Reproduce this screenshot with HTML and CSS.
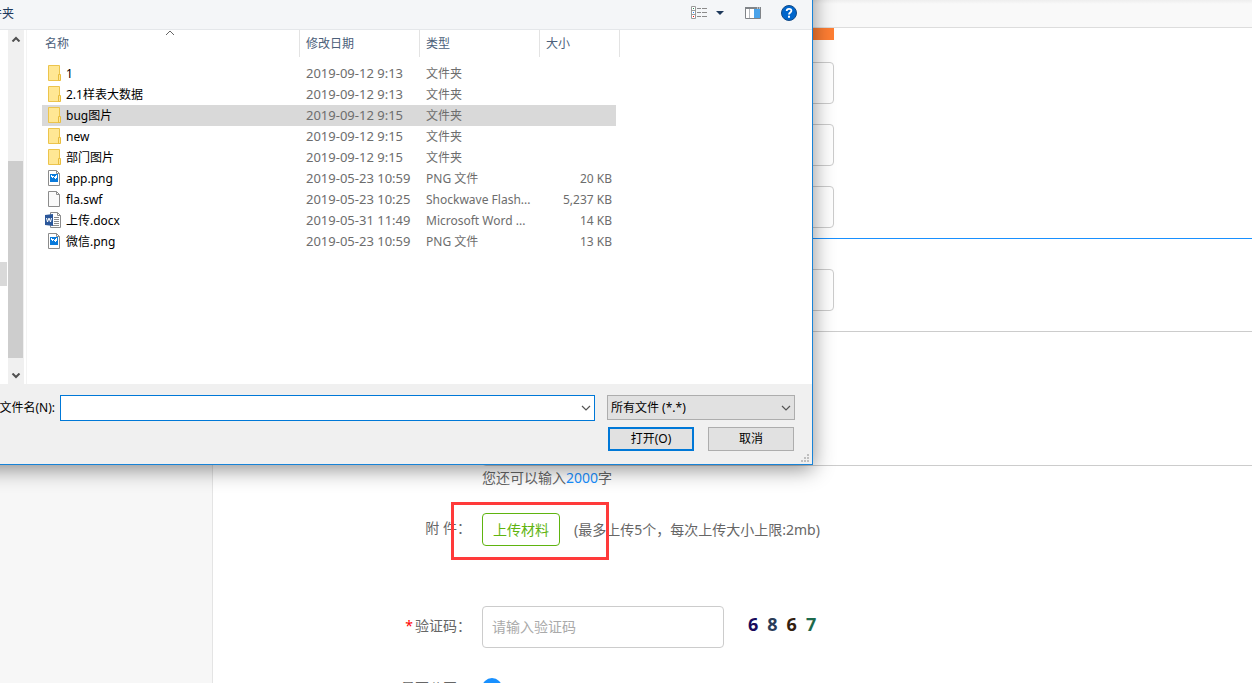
FILE: index.html
```html
<!DOCTYPE html>
<html lang="zh-CN">
<head>
<meta charset="utf-8">
<title>上传材料</title>
<link rel="stylesheet" href="styles.css">
</head>
<body>
<svg class="defs" width="0" height="0" aria-hidden="true">
  <symbol id="folder" viewBox="0 0 16 18">
    <path d="M1.5 1.5h11v15h-11z" fill="#ffe794" stroke="#ecc44c"/>
    <path d="M11.5 10.5h2v6h-2z" fill="#ffe794" stroke="#e8bd3e"/>
  </symbol>
  <symbol id="image" viewBox="0 0 16 18">
    <path d="M1.5 1.5h8l3 3v12h-11z" fill="#fff" stroke="#8c8c8c"/>
    <path d="M9.5 1.5v3h3" fill="none" stroke="#8c8c8c"/>
    <path d="M3 5h8v8H3z" fill="#0a7bdc"/>
    <path d="M4 6h1v1h2v1h1v-1h1v-1h1v3h-1v1h-1v-1h-1v-1h-1v1h-1v-1h-1z" fill="#fff"/>
  </symbol>
  <symbol id="file" viewBox="0 0 16 18">
    <path d="M1.5 1.5h8l3 3v12h-11z" fill="#fafafa" stroke="#8c8c8c"/>
    <path d="M9.5 1.5v3h3" fill="none" stroke="#8c8c8c"/>
  </symbol>
  <symbol id="word" viewBox="-2 0 16 18">
    <path d="M3.5 1.5h7l3 3v12h-10z" fill="#fff" stroke="#8c8c8c"/>
    <path d="M10.5 1.5v3h3M7 6.5h5M7 8.5h5M7 10.5h5M7 12.5h5M6 14.5h6" fill="none" stroke="#8c8c8c"/>
    <path d="M-2 4l8-1v12l-8-1z" fill="#2b579a"/>
    <path d="M-.5 7l1 4 1.500-4 1.500 4 1-4" fill="none" stroke="#fff"/>
  </symbol>
  <symbol id="chevron" viewBox="0 0 10 6">
    <path d="M1 1l4 4 4-4" fill="none" stroke="#555" stroke-width="1.200"/>
  </symbol>
</svg>

<header class="topbar"></header>
<div class="page">
  <aside class="sidebar"></aside>
  <main class="content">
    <form class="form">
      <div class="banner"></div>
      <div class="stack">
        <input class="field wide" type="text" aria-label="姓名">
        <input class="field wide" type="text" aria-label="电话">
        <input class="field wide" type="text" aria-label="邮箱">
      </div>
      <hr class="divider">
      <div class="stack letter">
        <input class="field wide" type="text" aria-label="标题">
        <textarea class="message" aria-label="内容"></textarea>
      </div>
      <p class="counter">您还可以输入<b>2000</b>字</p>
      <div class="row attach">
        <label class="label" for="upload">附 件：</label>
        <button class="upload" id="upload" type="button">上传材料</button>
        <span class="hint">(最多上传5个，每次上传大小上限:2mb)</span>
        <div class="marker"></div>
      </div>
      <div class="row verify">
        <label class="label" for="code"><i>*</i>验证码：</label>
        <input class="field code" id="code" type="text" placeholder="请输入验证码">
        <div class="captcha"><span class="c1">6</span><span class="c2">8</span><span class="c3">6</span><span class="c4">7</span></div>
      </div>
      <div class="row public">
        <label class="label" for="open">是否公开：</label>
        <input class="radio" id="open" type="radio" checked>
      </div>
    </form>
  </main>
</div>

<section class="dialog" role="dialog" aria-label="打开">
  <div class="toolbar">
    <div class="newfolder"><span>新建文件夹</span></div>
    <div class="tools">
      <button class="tool" type="button" aria-label="更改视图">
        <svg width="34" height="14" viewBox="0 0 34 14">
          <path d="M.5.5h4v12h-4zM.5 4.5h4M.5 8.5h4" fill="#fff" stroke="#9a9a9a"/>
          <path d="M2 2h1v1H2z" fill="#2e8b57"/><path d="M2 6h1v1H2z" fill="#2b8cff"/><path d="M2 10h1v1H2z" fill="#f00"/>
          <path d="M6 2.5h4m1 0h5M6 6.5h4m1 0h5M6 10.5h4m1 0h5" stroke="#8b8b8b"/>
          <path d="M25 5h8l-4 4z" fill="#1e395b"/>
        </svg>
      </button>
      <button class="tool" type="button" aria-label="预览窗格">
        <svg width="16" height="12" viewBox="0 0 16 12">
          <path d="M.5.5h15v11H.5z" fill="#fff" stroke="#808488"/>
          <path d="M0 0h16v2H0z" fill="#808488"/><path d="M4.5 2v9" stroke="#b5b9bd"/>
          <path d="M9 2h6v9H9z" fill="#4aa3ea"/><path d="M12 1h1m1 0h1" stroke="#fff"/>
        </svg>
      </button>
      <button class="tool" type="button" aria-label="帮助">
        <svg width="16" height="16" viewBox="0 0 16 16">
          <circle cx="8" cy="8" r="7.500" fill="#0066cc" stroke="#124a86"/>
          <path d="M5.700 6C5.700 3.200 10.400 3.200 10.400 5.800 10.400 7.500 8 7.600 8 9.600" fill="none" stroke="#fff" stroke-width="1.800"/>
          <path d="M7 10.800h2v2H7z" fill="#fff"/>
        </svg>
      </button>
    </div>
  </div>

  <div class="browser">
    <div class="tree"><div class="node"></div></div>
    <div class="scrollbar">
      <svg width="10" height="6"><path d="M1.500 5.500L5 2l3.500 3.500" fill="none" stroke="#505050" stroke-width="2"/></svg>
      <div class="thumb"></div>
      <svg width="10" height="6"><path d="M1.500.5L5 4 8.500.5" fill="none" stroke="#505050" stroke-width="2"/></svg>
    </div>
    <div class="files">
      <table class="list">
        <colgroup><col class="w-name"><col class="w-date"><col class="w-type"><col class="w-size"><col class="w-end"></colgroup>
        <thead>
          <tr><th>名称<svg class="sort" width="10" height="6"><path d="M1 5l4-4 4 4" fill="none" stroke="#666"/></svg></th><th>修改日期</th><th>类型</th><th colspan="2">大小</th></tr>
        </thead>
        <tbody>
          <tr><td><div class="name"><svg class="icon"><use href="#folder"/></svg>1</div></td><td>2019-09-12 9:13</td><td>文件夹</td><td></td></tr>
          <tr><td><div class="name"><svg class="icon"><use href="#folder"/></svg>2.1样表大数据</div></td><td>2019-09-12 9:13</td><td>文件夹</td><td></td></tr>
          <tr class="selected"><td><div class="name"><svg class="icon"><use href="#folder"/></svg>bug图片</div></td><td>2019-09-12 9:15</td><td>文件夹</td><td></td></tr>
          <tr><td><div class="name"><svg class="icon"><use href="#folder"/></svg>new</div></td><td>2019-09-12 9:15</td><td>文件夹</td><td></td></tr>
          <tr><td><div class="name"><svg class="icon"><use href="#folder"/></svg>部门图片</div></td><td>2019-09-12 9:15</td><td>文件夹</td><td></td></tr>
          <tr><td><div class="name"><svg class="icon"><use href="#image"/></svg>app.png</div></td><td>2019-05-23 10:59</td><td>PNG 文件</td><td>20 KB</td></tr>
          <tr><td><div class="name"><svg class="icon"><use href="#file"/></svg>fla.swf</div></td><td>2019-05-23 10:25</td><td>Shockwave Flash...</td><td>5,237 KB</td></tr>
          <tr><td><div class="name"><svg class="icon word"><use href="#word"/></svg>上传.docx</div></td><td>2019-05-31 11:49</td><td>Microsoft Word ...</td><td>14 KB</td></tr>
          <tr><td><div class="name"><svg class="icon"><use href="#image"/></svg>微信.png</div></td><td>2019-05-23 10:59</td><td>PNG 文件</td><td>13 KB</td></tr>
        </tbody>
      </table>
    </div>
  </div>

  <div class="footer">
    <div class="line">
      <label class="filelabel" for="filename">文件名(N):</label>
      <div class="combo"><input id="filename" type="text"><svg width="10" height="6"><use href="#chevron"/></svg></div>
      <div class="filter">
        <select aria-label="文件类型"><option>所有文件 (*.*)</option></select>
        <svg width="10" height="6"><use href="#chevron"/></svg>
      </div>
    </div>
    <div class="actions">
      <button class="btn primary" type="button">打开(O)</button>
      <button class="btn" type="button">取消</button>
    </div>
    <svg class="grip" width="9" height="9"><path d="M6 0h2v2H6zM3 3h2v2H3zM6 3h2v2H6zM0 6h2v2H0zM3 6h2v2H3zM6 6h2v2H6z" fill="#bfbfbf"/></svg>
  </div>
</section>
</body>
</html>
```
FILE: styles.css
```css
* { box-sizing: border-box; }

body {
  display: flex;
  flex-direction: column;
  height: 100vh;
  margin: 0;
  overflow: hidden;
  position: relative;
  background: #fff;
  color: #666;
  font: 14px/20px "Noto Sans", "Noto Sans CJK SC", sans-serif;
}

button, input, select, textarea { font: inherit; margin: 0; }
svg { display: block; flex: none; }
.defs { position: absolute; }

/* page */
.topbar {
  flex: none;
  height: 28px;
  border-bottom: 1px solid #ddd;
  background: linear-gradient(#eee, #f9f9f9 4px);
}
.page { display: flex; flex: 1; min-height: 0; }
.sidebar {
  flex: none;
  width: 213px;
  border-right: 1px solid #e4e4e4;
  background: #f7f7f7;
}
.content { flex: 1; min-width: 0; overflow: hidden; }
.banner { width: 352px; height: 12px; margin-left: 269px; background: #ff7e33; }
.stack {
  display: flex;
  flex-direction: column;
  gap: 20px;
  padding: 22px 0 10px 269px;
}
.stack.letter { padding: 30px 0 0 269px; }
.field {
  height: 42px;
  padding: 0 9px 2px;
  border: 1px solid #ccc;
  border-radius: 4px;
  background: #fff;
  color: #666;
}
.field::placeholder { color: #aaa; }
.field.wide { width: 352px; }
.divider { height: 1px; margin: 0; border: 0; background: #1890ff; }
.message {
  width: 120%;
  height: 135px;
  border: 1px solid #ccc;
  border-radius: 4px;
  resize: none;
}
.counter { margin: 2px 0 0 269px; }
.counter b { color: #1890ff; font-weight: 400; }
.row { display: flex; align-items: center; position: relative; }
.label { width: 269px; padding: 0 11px 3px 0; text-align: right; }
.label i { color: #f00; font-style: normal; padding-right: 2px; }
.attach { margin-top: 25px; }
.upload {
  width: 78px;
  height: 33px;
  padding: 0;
  border: 1px solid #5fb40f;
  border-radius: 4px;
  background: #fff;
  color: #5fb40f;
}
.hint { padding-left: 14px; }
.marker {
  position: absolute;
  left: 238px;
  top: -11px;
  width: 158px;
  height: 58px;
  border: 3px solid #ff3a3a;
}
.verify { margin-top: 60px; }
.field.code { width: 242px; }
.captcha {
  display: flex;
  gap: 9px;
  padding: 0 0 6px 24px;
  font: 700 18px/20px "Noto Sans", sans-serif;
}
.c1 { color: #180a5c; }
.c2 { color: #2a3c58; }
.c3 { color: #33200f; }
.c4 { color: #1d6a4c; }
.public { align-items: flex-start; margin-top: 30px; }
.radio {
  width: 20px;
  height: 20px;
  appearance: none;
  border-radius: 50%;
  background: #1890ff;
}

/* file dialog, partly beyond the top left corner of the window */
.dialog {
  position: absolute;
  left: -30px;
  top: -30px;
  width: 843px;
  padding: 30px 0 0 30px;
  border: solid #1883d7;
  border-width: 0 1px 1px 0;
  background: #fff;
  box-shadow: 0 4px 20px rgba(0, 0, 0, .45);
  color: #000;
  font-size: 12px;
  line-height: 16px;
}
.toolbar {
  display: flex;
  align-items: center;
  justify-content: space-between;
  height: 30px;
  padding: 0 15px 3px 0;
  border-bottom: 1px solid #e4e7ea;
  background: #f4f6f8;
  color: #1e395b;
}
.newfolder { display: flex; justify-content: flex-end; width: 14px; padding-top: 2px; overflow: hidden; white-space: nowrap; }
.tools { display: flex; align-items: center; gap: 20px; }
.tool { padding: 0; border: 0; background: none; }
.browser { display: flex; min-height: 354px; }
.tree { width: 8px; padding-top: 232px; }
.node { width: 7px; height: 24px; background: #d9d9d9; }
.scrollbar {
  display: flex;
  flex-direction: column;
  align-items: center;
  width: 16px;
  padding: 6px 1px 5px 0;
  background: #f0f0f0;
}
.thumb { width: 15px; height: 197px; margin: 119px 0 15px; background: #cdcdcd; }
.files { flex: 1; margin-left: 2px; padding-left: 15px; border-left: 1px solid #f3f3f3; }

.list { width: 578px; border-collapse: separate; border-spacing: 0; table-layout: fixed; }
.w-name { width: 258px; }
.w-date, .w-type { width: 120px; }
.w-size { width: 76px; }
.w-end { width: 4px; }
.list th {
  position: relative;
  height: 27px;
  padding: 0 0 0 6px;
  border-right: 1px solid #e3e3e3;
  color: #4c607a;
  font-weight: 400;
  text-align: left;
}
.list th:first-child { padding-left: 3px; }
.sort { position: absolute; left: 123px; top: 0; }
.list tbody::before { content: ""; display: block; height: 6px; }
.list td { height: 21px; padding: 0 0 0 6px; color: #6d6d6d; white-space: nowrap; }
.list td:first-child { padding-left: 5px; color: #000; }
.list td:nth-child(2) { padding-bottom: 2px; font-size: 13px; }
.list td:nth-child(4) { padding: 0 4px 0 0; text-align: right; }
.selected td { background: #d9d9d9; }
.name { display: flex; align-items: center; gap: 3px; }
.icon { width: 16px; height: 18px; margin-bottom: 2px; }
.icon.word { margin: 0 2px 2px -2px; }

.footer { position: relative; padding: 11px 17px 13px 0; background: #f0f0f0; }
.line { display: flex; align-items: flex-start; }
.filelabel { display: flex; justify-content: flex-end; width: 55px; margin: 5px 5px 0 0; white-space: nowrap; }
.combo {
  display: flex;
  align-items: center;
  flex: 1;
  height: 26px;
  margin-right: 12px;
  padding-right: 3px;
  border: 1px solid #0078d7;
  background: #fff;
}
.combo input { flex: 1; min-width: 0; border: 0; outline: 0; background: none; }
.filter { display: flex; align-items: center; width: 188px; position: relative; }
.filter select {
  width: 100%;
  height: 25px;
  padding: 0 3px;
  appearance: none;
  border: 1px solid #adadad;
  border-radius: 0;
  background: #e1e1e1;
  color: #000;
}
.filter svg { position: absolute; right: 4px; pointer-events: none; }
.actions { display: flex; justify-content: flex-end; gap: 14px; padding: 6px 1px 0 0; }
.btn {
  width: 86px;
  height: 24px;
  padding: 0;
  border: 1px solid #adadad;
  background: #e1e1e1;
  color: #000;
}
.btn.primary { border: 2px solid #0078d7; }
.grip { position: absolute; right: 2px; bottom: 1px; }
```
